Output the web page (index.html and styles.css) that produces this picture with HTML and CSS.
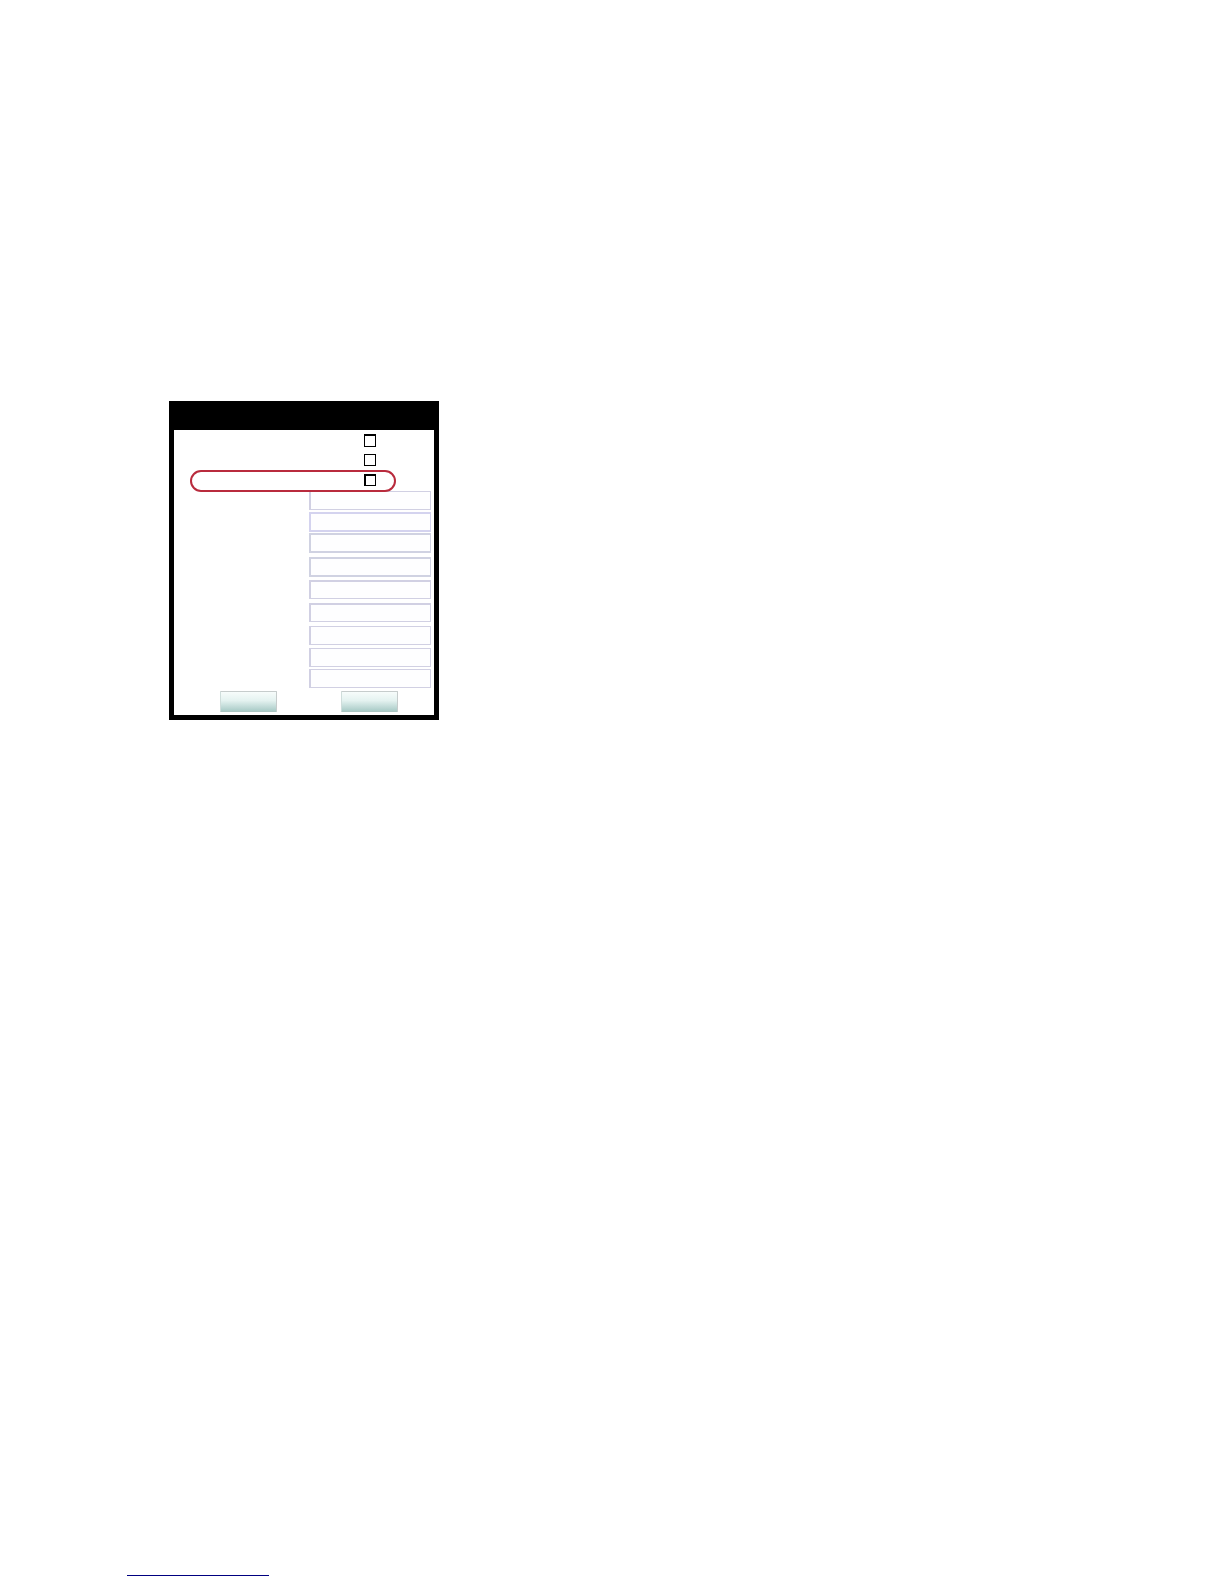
FILE: index.html
```html
<!DOCTYPE html>
<html lang="en">
<head>
<meta charset="utf-8">
<title>Settings</title>
<link rel="stylesheet" href="styles.css">
</head>
<body>
<main class="content">
  <form class="panel">
    <div class="body">
      <div class="options">
        <div class="option"><input class="check check-first" type="checkbox" aria-label="Option 1"></div>
        <div class="option"><input class="check" type="checkbox" aria-label="Option 2"></div>
        <div class="option option-marked"><input class="check check-heavy" type="checkbox" aria-label="Option 3"></div>
      </div>
      <div class="fields">
        <input class="field field-light" type="text" aria-label="Field 1">
        <input class="field field-violet" type="text" aria-label="Field 2">
        <input class="field" type="text" aria-label="Field 3">
        <input class="field" type="text" aria-label="Field 4">
        <input class="field field-light field-top" type="text" aria-label="Field 5">
        <input class="field field-light field-top" type="text" aria-label="Field 6">
        <input class="field field-light" type="text" aria-label="Field 7">
        <input class="field field-light" type="text" aria-label="Field 8">
        <input class="field field-light" type="text" aria-label="Field 9">
      </div>
      <div class="actions">
        <button class="button" type="button" aria-label="Save"></button>
        <button class="button" type="button" aria-label="Cancel"></button>
      </div>
    </div>
  </form>
</main>
<footer class="footer"><a class="link" href="#" aria-label="Website"></a></footer>
</body>
</html>
```
FILE: styles.css
```css
* {
  box-sizing: border-box;
}

body {
  display: flex;
  flex-direction: column;
  min-height: 100vh;
  margin: 0;
  background: #fff;
  font-family: "Liberation Sans", Arial, sans-serif;
}

.content {
  flex: 1;
  padding: 401px 24px 24px 169px;
}

.panel {
  width: 270px;
  max-width: 100%;
  padding: 29px 5px 5px;
  background: #000;
}

.body {
  padding: 2px 3px 3px 18px;
  background: #fff;
}

.options {
  width: 202px;
  padding-bottom: 1px;
}

.option {
  display: flex;
  justify-content: flex-end;
  align-items: flex-start;
  height: 20px;
  padding: 2px 18px 0 0;
}

.option-marked {
  position: relative;
  height: 18px;
  border-radius: 9px;
  outline: 2px solid #b92b3d;
}

.check {
  appearance: none;
  width: 12px;
  height: 12px;
  margin: 0;
  border: 1px solid #000;
  background: #fff;
}

.check-first {
  height: 13px;
  border-top-width: 2px;
}

.check-heavy {
  border-top-width: 2px;
  border-left-width: 2px;
}

.fields {
  display: grid;
  grid-template-rows: 21px 21px 24px 23px 23px 23px 22px 21px 22px;
  justify-content: end;
  grid-template-columns: 122px;
}

.field {
  width: 100%;
  height: 20px;
  margin: 0;
  padding: 0 4px;
  border: 2px solid #d0d2e2;
  border-right-width: 1px;
  border-radius: 0;
  background: #fefeff;
  font: inherit;
  font-size: 12px;
}

.field-violet {
  border-color: #d4d3ef;
}

.field-light {
  height: 19px;
  border-color: #d1d0e3;
  border-width: 1px 1px 1px 2px;
}

.field-top {
  border-top-width: 2px;
}

.actions {
  display: flex;
  gap: 64px;
  padding-left: 28px;
}

.button {
  width: 57px;
  height: 21px;
  padding: 0;
  border: 1px solid #c6cccc;
  border-bottom-color: #abc6c2;
  border-left-color: #cfdddb;
  border-radius: 1px;
  background: linear-gradient(#f7fcfb, #e4f2f0 45%, #a9cbc7);
}

.footer {
  padding: 0 127px 8px;
}

.link {
  display: block;
  width: 142px;
  height: 16px;
  border-bottom: 1px solid #000080;
}
```
